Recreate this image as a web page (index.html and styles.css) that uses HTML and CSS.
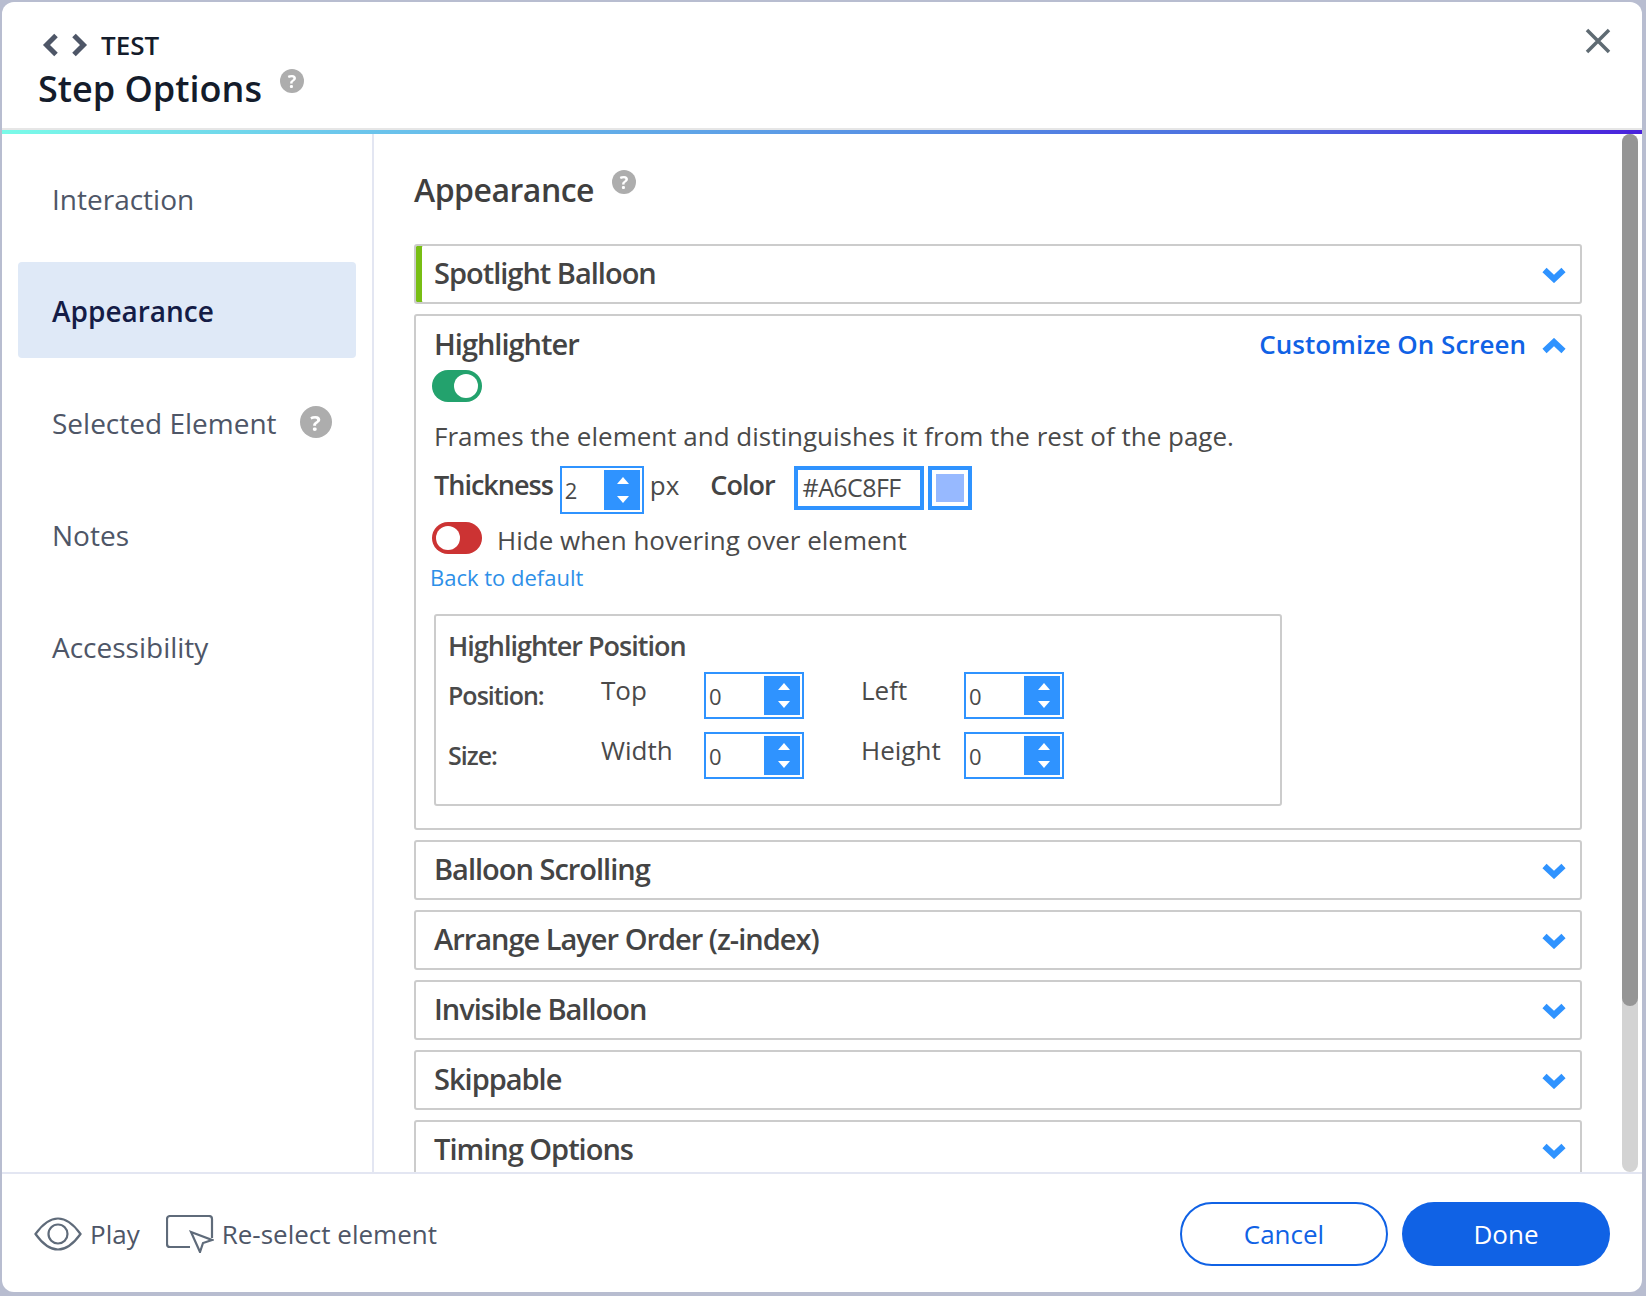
FILE: index.html
```html
<!DOCTYPE html>
<html lang="en">
<head>
  <meta charset="UTF-8">
  <title>Step Options</title>
  <link rel="stylesheet" href="styles.css">
</head>
<body>
  <div class="window">
    <header class="top">
      <div class="crumb">
        <svg class="nav-icon" width="46" height="24" viewBox="0 0 46 24"><path d="M14 2.500 4.500 12l9.500 9.500M32 2.500l9.500 9.500-9.500 9.500"/></svg>
        <span>TEST</span>
      </div>
      <div class="top-title">
        <h1>Step Options</h1>
        <span class="help help-top">?</span>
      </div>
      <svg class="close" width="26" height="26" viewBox="0 0 26 26"><path d="M2 2l22 22M24 2 2 24"/></svg>
    </header>
    <div class="rainbow"></div>

    <div class="middle">
      <nav class="side">
        <a class="side-item">Interaction</a>
        <a class="side-item active">Appearance</a>
        <a class="side-item">Selected Element <span class="help help-side">?</span></a>
        <a class="side-item">Notes</a>
        <a class="side-item">Accessibility</a>
      </nav>

      <main class="content">
        <div class="content-title">
          <h2>Appearance</h2>
          <span class="help help-top">?</span>
        </div>

        <section class="acc green">
          <h3>Spotlight Balloon</h3>
          <svg class="chev" width="24" height="16" viewBox="0 0 24 16"><path d="M2.500 3 12 12l9.500-9"/></svg>
        </section>

        <section class="acc-open">
          <div class="acc-open-head">
            <h3>Highlighter</h3>
            <a class="customize">Customize On Screen</a>
            <svg class="chev" width="24" height="16" viewBox="0 0 24 16"><path d="M2.500 13 12 4l9.500 9"/></svg>
          </div>
          <div class="toggle on"><i></i></div>
          <p class="desc">Frames the element and distinguishes it from the rest of the page.</p>
          <div class="thick-row">
            <b>Thickness</b>
            <div class="spin thin"><span>2</span><div class="arrows"><i class="up"></i><i class="down"></i></div></div>
            <span class="px">px</span>
            <b class="color-label">Color</b>
            <div class="hex">#A6C8FF</div>
            <div class="swatch"><i></i></div>
          </div>
          <div class="hide-row">
            <div class="toggle off"><i></i></div>
            <span>Hide when hovering over element</span>
          </div>
          <a class="back">Back to default</a>

          <div class="pos-box">
            <h4>Highlighter Position</h4>
            <div class="pos-grid">
              <b>Position:</b>
              <span>Top</span>
              <div class="spin"><span>0</span><div class="arrows"><i class="up"></i><i class="down"></i></div></div>
              <span>Left</span>
              <div class="spin"><span>0</span><div class="arrows"><i class="up"></i><i class="down"></i></div></div>
              <b>Size:</b>
              <span>Width</span>
              <div class="spin"><span>0</span><div class="arrows"><i class="up"></i><i class="down"></i></div></div>
              <span>Height</span>
              <div class="spin"><span>0</span><div class="arrows"><i class="up"></i><i class="down"></i></div></div>
            </div>
          </div>
        </section>

        <section class="acc">
          <h3>Balloon Scrolling</h3>
          <svg class="chev" width="24" height="16" viewBox="0 0 24 16"><path d="M2.500 3 12 12l9.500-9"/></svg>
        </section>
        <section class="acc">
          <h3>Arrange Layer Order (z-index)</h3>
          <svg class="chev" width="24" height="16" viewBox="0 0 24 16"><path d="M2.500 3 12 12l9.500-9"/></svg>
        </section>
        <section class="acc">
          <h3>Invisible Balloon</h3>
          <svg class="chev" width="24" height="16" viewBox="0 0 24 16"><path d="M2.500 3 12 12l9.500-9"/></svg>
        </section>
        <section class="acc">
          <h3>Skippable</h3>
          <svg class="chev" width="24" height="16" viewBox="0 0 24 16"><path d="M2.500 3 12 12l9.500-9"/></svg>
        </section>
        <section class="acc">
          <h3>Timing Options</h3>
          <svg class="chev" width="24" height="16" viewBox="0 0 24 16"><path d="M2.500 3 12 12l9.500-9"/></svg>
        </section>
      </main>

      <div class="scrollbar"><div class="thumb"></div></div>
    </div>

    <footer class="bottom">
      <a class="tool">
        <svg width="48" height="34" viewBox="0 0 48 34" class="tool-icon"><path d="M1.500 17C9 6.500 16 1.500 24 1.500S39 6.500 46.500 17C39 27.500 32 32.500 24 32.500S9 27.500 1.500 17Z"/><circle cx="24" cy="17" r="9.500"/></svg>
        <span>Play</span>
      </a>
      <a class="tool">
        <svg width="48" height="38" viewBox="0 0 48 38" class="tool-icon"><path d="M24 32H4a3 3 0 0 1-3-3V4a3 3 0 0 1 3-3h39a3 3 0 0 1 3 3v19"/><path d="M25 17l21 8-9 3-3 9Z"/></svg>
        <span>Re-select element</span>
      </a>
      <div class="buttons">
        <a class="btn cancel">Cancel</a>
        <a class="btn done">Done</a>
      </div>
    </footer>
  </div>
</body>
</html>
```
FILE: styles.css
```css
* {
  box-sizing: border-box;
}
html, body {
  margin: 0;
  height: 100%;
}
body {
  font-family: "Open Sans", sans-serif;
  background: #b8bdd0;
  padding: 2px 4px 4px 2px;
  overflow: hidden;
}
h1, h2, h3, h4, p {
  margin: 0;
}
.window {
  height: 1290px;
  background: #fff;
  border-radius: 12px;
  display: flex;
  flex-direction: column;
  overflow: hidden;
}

/* header */
.top {
  position: relative;
  height: 128px;
  padding: 27px 0 0 36px;
  border-bottom: 2px solid #e6e6e6;
  flex: none;
}
.crumb {
  display: flex;
  align-items: center;
  gap: 13px;
  padding-left: 4px;
  height: 32px;
  font-size: 26px;
  font-weight: 600;
  color: #141c2b;
}
.nav-icon path {
  fill: none;
  stroke: #4e5667;
  stroke-width: 5;
}
.top-title {
  display: flex;
  align-items: flex-start;
  height: 50px;
  margin-top: 3px;
}
h1 {
  font-size: 36px;
  line-height: 50px;
  font-weight: 600;
  color: #141c2b;
}
.help {
  display: inline-flex;
  align-items: center;
  justify-content: center;
  border-radius: 50%;
  background: #adadad;
  color: #fff;
  font-weight: 700;
  filter: blur(0.5px);
}
.help-top {
  width: 24px;
  height: 24px;
  font-size: 18px;
  margin-left: 18px;
  margin-top: 5px;
}
.help-side {
  width: 32px;
  height: 32px;
  font-size: 22px;
  margin: -2px 0 0 23px;
}
.close {
  position: absolute;
  right: 31px;
  top: 26px;
}
.close path {
  fill: none;
  stroke: #5f6b73;
  stroke-width: 3.500;
}
.rainbow {
  height: 4px;
  flex: none;
  background: linear-gradient(90deg, #7afbe8 0%, #6cc8ec 20%, #4c6fe0 75%, #4a22dc 100%);
}

/* middle */
.middle {
  flex: 1;
  display: flex;
  min-height: 0;
}
.side {
  width: 372px;
  flex: none;
  padding: 16px 16px 0;
  border-right: 2px solid #e3e6f2;
  display: flex;
  flex-direction: column;
  gap: 16px;
}
.side-item {
  height: 96px;
  padding-left: 34px;
  padding-top: 2px;
  border-radius: 4px;
  display: flex;
  align-items: center;
  font-size: 28px;
  color: #4e5667;
  width: 338px;
}
.side-item.active {
  background: #dfe9f7;
  color: #141c46;
  font-weight: 600;
}
.content {
  flex: 1;
  min-width: 0;
  padding: 0 40px;
  overflow: hidden;
}
.content-title {
  display: flex;
  align-items: flex-start;
  height: 110px;
  padding-top: 31px;
}
h2 {
  font-size: 32px;
  line-height: 50px;
  font-weight: 600;
  color: #3f3f3f;
  letter-spacing: -0.5px;
}
.acc {
  height: 60px;
  border: 2px solid #ccc;
  border-radius: 3px;
  display: flex;
  align-items: center;
  justify-content: space-between;
  padding: 0 14px 0 18px;
  margin-bottom: 10px;
}
.acc.green {
  box-shadow: inset 6px 0 0 #78be14;
}
h3 {
  font-size: 29px;
  font-weight: 600;
  color: #444;
  letter-spacing: -1px;
  margin-top: -3px;
}
.chev {
  flex: none;
  margin-top: 2px;
}
.chev path {
  fill: none;
  stroke: #2f93ff;
  stroke-width: 6;
}
.acc-open {
  height: 516px;
  border: 2px solid #ccc;
  border-radius: 3px;
  padding: 8px 14px 0 18px;
  margin-bottom: 10px;
}
.acc-open-head {
  display: flex;
  align-items: center;
  height: 42px;
}
.customize {
  margin: -2px 16px 0 auto;
  font-size: 26px;
  font-weight: 600;
  color: #1062e5;
}
.toggle {
  width: 50px;
  height: 32px;
  border-radius: 16px;
  padding: 4px;
  display: flex;
}
.toggle i {
  display: block;
  width: 24px;
  height: 24px;
  border-radius: 50%;
  background: #fff;
}
.toggle.on {
  background: #23a26d;
  justify-content: flex-end;
  margin: 4px 0 0 -2px;
}
.toggle.off {
  background: #cc3333;
  margin-left: -2px;
}
.desc {
  font-size: 26px;
  line-height: 36px;
  color: #4a4a4a;
  margin-top: 16px;
}
.thick-row {
  display: flex;
  align-items: center;
  height: 48px;
  margin-top: 12px;
  font-size: 27px;
  color: #444;
}
.thick-row b {
  font-weight: 600;
  letter-spacing: -1px;
  margin-top: -12px;
}
.px {
  font-size: 26px;
  margin: -10px 31px 0 6px;
  color: #4a4a4a;
}
.color-label {
  margin-right: 19px;
}
.spin {
  width: 100px;
  height: 47px;
  border: 2px solid #2f93ff;
  padding: 2px;
  display: flex;
  justify-content: space-between;
  background: #fff;
}
.spin > span {
  font-size: 22px;
  line-height: 40px;
  color: #4a4a4a;
  padding-left: 1px;
}
.spin.thin {
  width: 84px;
  height: 48px;
  margin-left: 7px;
}
.arrows {
  width: 36px;
  background: #2f93ff;
  display: flex;
  flex-direction: column;
  align-items: center;
  justify-content: space-between;
  padding: 7px 0 7px 3px;
}
.arrows i {
  display: block;
  width: 0;
  height: 0;
  border-left: 6px solid transparent;
  border-right: 6px solid transparent;
}
.arrows .up {
  border-bottom: 7px solid #fff;
}
.arrows .down {
  border-top: 7px solid #fff;
}
.hex {
  width: 130px;
  height: 44px;
  border: 4px solid #2f93ff;
  font-size: 25px;
  line-height: 34px;
  letter-spacing: -0.6px;
  padding-left: 5px;
  color: #4a4a4a;
  margin-top: -4px;
}
.swatch {
  width: 44px;
  height: 44px;
  border: 4px solid #2f93ff;
  padding: 4px;
  margin: -4px 0 0 4px;
}
.swatch i {
  display: block;
  height: 100%;
  background: #97b9ff;
}
.hide-row {
  display: flex;
  align-items: center;
  gap: 15px;
  margin-top: 5px;
  font-size: 26px;
  color: #4a4a4a;
}
.hide-row span {
  line-height: 32px;
  margin-top: 5px;
}
.back {
  display: block;
  margin: 1px 0 0 -4px;
  font-size: 22px;
  line-height: 40px;
  color: #2d8fe8;
}
.pos-box {
  width: 848px;
  height: 192px;
  border: 2px solid #ccc;
  border-radius: 3px;
  margin-top: 17px;
  padding: 12px 12px 0;
}
h4 {
  font-size: 27px;
  line-height: 36px;
  font-weight: 600;
  color: #4a4a4a;
  letter-spacing: -1px;
}
.pos-grid {
  display: grid;
  grid-template-columns: 153px 103px 157px 103px 100px;
  grid-auto-rows: 47px;
  row-gap: 13px;
  margin-top: 8px;
  align-items: center;
  font-size: 26px;
  color: #4a4a4a;
}
.pos-grid b {
  font-size: 25px;
  font-weight: 600;
  letter-spacing: -1px;
  margin-top: -2px;
}
.pos-grid > span {
  margin-top: -11px;
}

/* scrollbar */
.scrollbar {
  flex: none;
  width: 16px;
  margin-right: 4px;
  border-radius: 8px;
  background: #d3d3d3;
}
.thumb {
  height: 872px;
  border-radius: 8px;
  background: #959595;
}

/* footer */
.bottom {
  height: 120px;
  flex: none;
  border-top: 2px solid #e3e6f2;
  padding: 2px 32px 0;
  display: flex;
  align-items: center;
  font-size: 26px;
  color: #4e5667;
}
.tool {
  display: flex;
  align-items: center;
  gap: 8px;
  margin-right: 26px;
}
.tool-icon * {
  fill: none;
  stroke: #5f6b7a;
  stroke-width: 2.200;
}
.buttons {
  margin-left: auto;
  display: flex;
  gap: 14px;
}
.btn {
  width: 208px;
  height: 64px;
  border-radius: 32px;
  display: flex;
  align-items: center;
  justify-content: center;
  font-size: 26px;
}
.cancel {
  border: 2px solid #1062e5;
  color: #1062e5;
}
.done {
  background: #1062e5;
  color: #fff;
}
```
